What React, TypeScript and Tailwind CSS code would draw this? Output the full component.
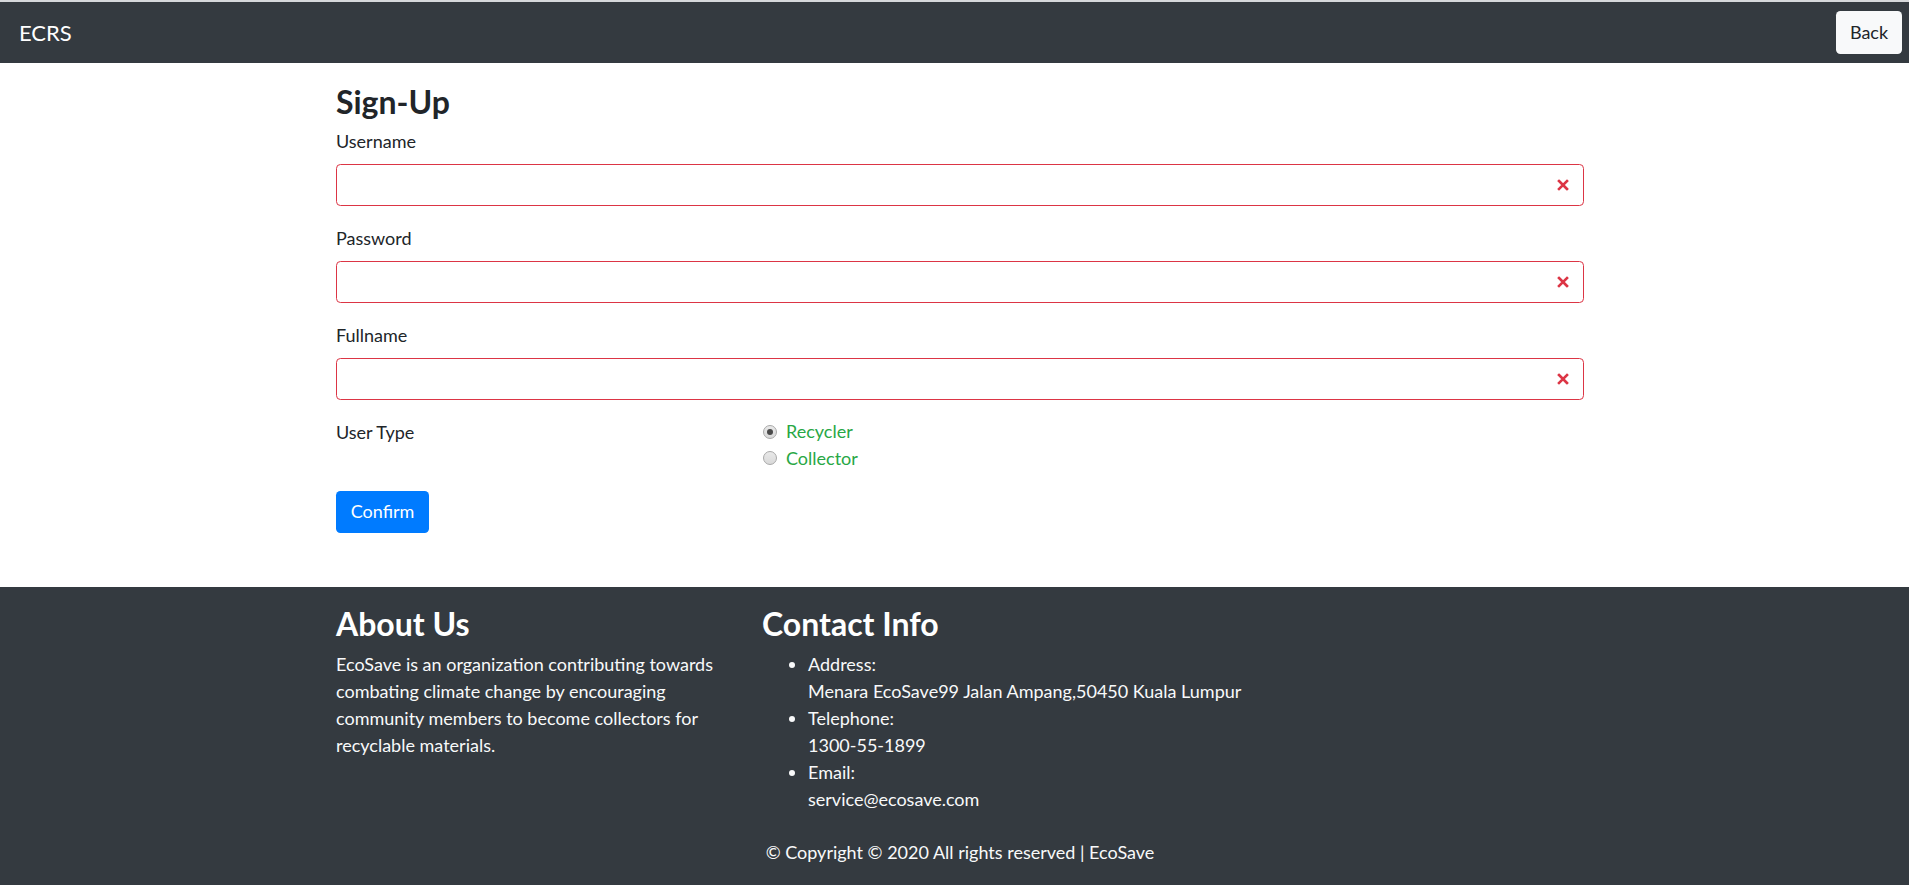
import React, { useState } from "react";

// Red "x" shown at the end of an invalid field
function InvalidIcon() {
  return (
    <svg className="w-[12px] h-[12px] shrink-0" viewBox="0 0 12 12" fill="none">
      <path d="M2 2l8 8M10 2l-8 8" stroke="#dc3545" strokeWidth="2.6" strokeLinecap="square" />
    </svg>
  );
}

function Field({ label, type = "text" }: { label: string; type?: string }) {
  return (
    <div className="mb-[18.5px]">
      <label className="block text-[18px] leading-[26.4px] text-[#212529] mb-[10px]">{label}</label>
      <div className="flex items-center h-[42px] border border-[#dc3545] rounded-[4.4px] pl-[13px] pr-[14px] bg-white">
        <input type={type} className="flex-1 h-full outline-none bg-transparent text-[18px] text-[#495057]" />
        <InvalidIcon />
      </div>
    </div>
  );
}

function Radio({ label, checked, onClick }: { label: string; checked: boolean; onClick: () => void }) {
  return (
    <button type="button" onClick={onClick} className="flex items-center h-[26.4px] text-left">
      <span className="w-[14px] h-[14px] rounded-full border border-[#a8a8a8] bg-gradient-to-b from-[#e9e9e9] to-[#d9d9d9] flex items-center justify-center ml-[1px]">
        {checked && <span className="w-[6px] h-[6px] rounded-full bg-[#4a4a4a]"></span>}
      </span>
      <span className="ml-[9px] text-[18px] text-[#28a745]">{label}</span>
    </button>
  );
}

export default function App() {
  const [userType, setUserType] = useState("recycler");

  return (
    <div className="min-h-[888px] bg-white font-['Lato','Open_Sans',sans-serif] text-[#212529]">
      {/* top strip */}
      <div className="h-[2px] bg-[#d6d8db]"></div>

      {/* Navbar */}
      <nav className="h-[61px] bg-[#343a40] flex items-center justify-between pl-[19px] pr-[7px]">
        <span className="text-[22px] text-white">ECRS</span>
        <button className="h-[43px] w-[66px] bg-[#f8f9fa] rounded-[4.4px] text-[18px] text-[#212529]">Back</button>
      </nav>

      {/* Sign-up form */}
      <main className="ml-[336px] w-[1248px] pt-[20px] pb-[54.5px]">
        <h3 className="text-[32px] leading-[37px] font-bold mb-[8px] text-[#212529]">Sign-Up</h3>
        <Field label="Username" />
        <Field label="Password" type="password" />
        <Field label="Fullname" />

        <div className="flex mb-[19px]">
          <div className="w-[426px] text-[18px] leading-[26.4px]">User Type</div>
          <div className="flex flex-col">
            <Radio label="Recycler" checked={userType === "recycler"} onClick={() => setUserType("recycler")} />
            <Radio label="Collector" checked={userType === "collector"} onClick={() => setUserType("collector")} />
          </div>
        </div>

        <button className="h-[42px] w-[93px] bg-[#007bff] rounded-[4.4px] text-white text-[18px]">Confirm</button>
      </main>

      {/* Footer */}
      <footer className="bg-[#343a40] text-white pt-[18px] pb-[19px]">
        <div className="ml-[336px] w-[1248px]">
          <div className="flex">
            <div className="w-[426px] pr-[33px]">
              <h3 className="text-[32px] leading-[37px] font-bold mb-[9px]">About Us</h3>
              <p className="text-[18px] leading-[26.9px] text-[#f8f9fa]">
                EcoSave is an organization contributing towards combating climate change by encouraging community members to become collectors for recyclable materials.
              </p>
            </div>
            <div>
              <h3 className="text-[32px] leading-[37px] font-bold mb-[9px]">Contact Info</h3>
              <ul className="list-disc pl-[46px] text-[18px] leading-[26.9px] text-[#f8f9fa]">
                <li>
                  Address:
                  <br />
                  Menara EcoSave99 Jalan Ampang,50450 Kuala Lumpur
                </li>
                <li>
                  Telephone:
                  <br />
                  1300-55-1899
                </li>
                <li>
                  Email:
                  <br />
                  service@ecosave.com
                </li>
              </ul>
            </div>
          </div>
          <p className="mt-[27px] text-center text-[18px] leading-[26.4px] text-[#f8f9fa]">
            © Copyright © 2020 All rights reserved | EcoSave
          </p>
        </div>
      </footer>
    </div>
  );
}
